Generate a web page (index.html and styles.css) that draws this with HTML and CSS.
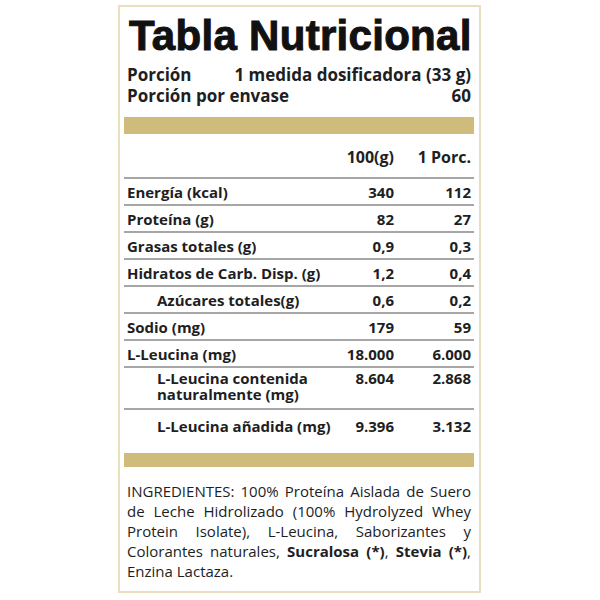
FILE: index.html
```html
<!DOCTYPE html>
<html lang="es">
<head>
<meta charset="utf-8">
<title>Tabla Nutricional</title>
<link rel="stylesheet" href="styles.css">
</head>
<body>
<div class="label">
  <h1 class="title">Tabla Nutricional</h1>
  <div class="serving">
    <div class="serving-row"><span>Porción</span><span>1 medida dosificadora (33 g)</span></div>
    <div class="serving-row"><span>Porción por envase</span><span>60</span></div>
  </div>
  <div class="bar"></div>
  <div class="table">
    <div class="row head"><span></span><span class="num">100(g)</span><span class="num">1 Porc.</span></div>
    <div class="row"><span>Energía (kcal)</span><span class="num">340</span><span class="num">112</span></div>
    <div class="row"><span>Proteína (g)</span><span class="num">82</span><span class="num">27</span></div>
    <div class="row"><span>Grasas totales (g)</span><span class="num">0,9</span><span class="num">0,3</span></div>
    <div class="row"><span>Hidratos de Carb. Disp. (g)</span><span class="num">1,2</span><span class="num">0,4</span></div>
    <div class="row"><span class="indent">Azúcares totales(g)</span><span class="num">0,6</span><span class="num">0,2</span></div>
    <div class="row"><span>Sodio (mg)</span><span class="num">179</span><span class="num">59</span></div>
    <div class="row"><span>L-Leucina (mg)</span><span class="num">18.000</span><span class="num">6.000</span></div>
    <div class="row tall"><span class="indent">L-Leucina contenida<br>naturalmente (mg)</span><span class="num">8.604</span><span class="num">2.868</span></div>
    <div class="row last"><span class="indent">L-Leucina añadida (mg)</span><span class="num">9.396</span><span class="num">3.132</span></div>
  </div>
  <div class="bar bar-bottom"></div>
  <p class="ingredients">
    <span class="line">INGREDIENTES: 100% Proteína Aislada de Suero</span>
    <span class="line">de Leche Hidrolizado (100% Hydrolyzed Whey</span>
    <span class="line">Protein Isolate), L-Leucina, Saborizantes y</span>
    <span class="line">Colorantes naturales, <b>Sucralosa (*)</b>, <b>Stevia (*)</b>,</span>
    <span class="line end">Enzina Lactaza.</span>
  </p>
</div>
</body>
</html>
```
FILE: styles.css
```css
html, body {
  margin: 0;
  padding: 0;
  background: #ffffff;
}
body {
  font-family: "Open Sans", "Liberation Sans", sans-serif;
  color: #211e1f;
}
.label {
  box-sizing: border-box;
  margin: 5px 0 0 118px;
  width: 363px;
  height: 588px;
  border: 2px solid #e9dfbd;
  padding: 0 5px 0 4px;
}
.title {
  margin: 0;
  padding: 5px 0 0 5px;
  font-family: "Liberation Sans", Arial, sans-serif;
  font-weight: 700;
  font-size: 42px;
  line-height: 48px;
  letter-spacing: 0.3px;
  -webkit-text-stroke: 1px #111;
  color: #111;
}
.serving {
  padding: 4px 3px 0 3px;
  font-weight: 700;
  font-size: 17px;
  line-height: 21px;
}
.serving-row {
  display: flex;
  justify-content: space-between;
}
.bar {
  height: 17px;
  background: #cfbb7c;
  margin-top: 11px;
}
.bar-bottom {
  height: 14px;
  margin-top: 13px;
}
.table {
  font-weight: 700;
  font-size: 15px;
  white-space: nowrap;
}
.row {
  display: grid;
  grid-template-columns: minmax(0, 1fr) 70px 77px;
  align-items: center;
  padding: 2px 3px 0 3px;
  height: 23px;
  border-bottom: 2px solid #a6a6a6;
  line-height: 17px;
}
.row.head {
  box-sizing: border-box;
  height: 45px;
  padding-top: 4px;
  font-size: 16px;
  font-weight: 700;
}
.row.tall {
  box-sizing: border-box;
  height: 42px;
  align-items: start;
  padding-top: 2px;
  line-height: 16px;
}
.row.last {
  border-bottom: none;
  height: 28px;
}
.num {
  text-align: right;
}
.indent {
  padding-left: 30px;
}
.ingredients {
  margin: 14px 3px 0 3px;
  font-size: 15px;
  line-height: 20px;
  font-weight: 400;
}
.line {
  display: block;
  text-align: justify;
  text-align-last: justify;
}
.line.end {
  text-align-last: left;
}
.ingredients b {
  font-weight: 700;
}
```
